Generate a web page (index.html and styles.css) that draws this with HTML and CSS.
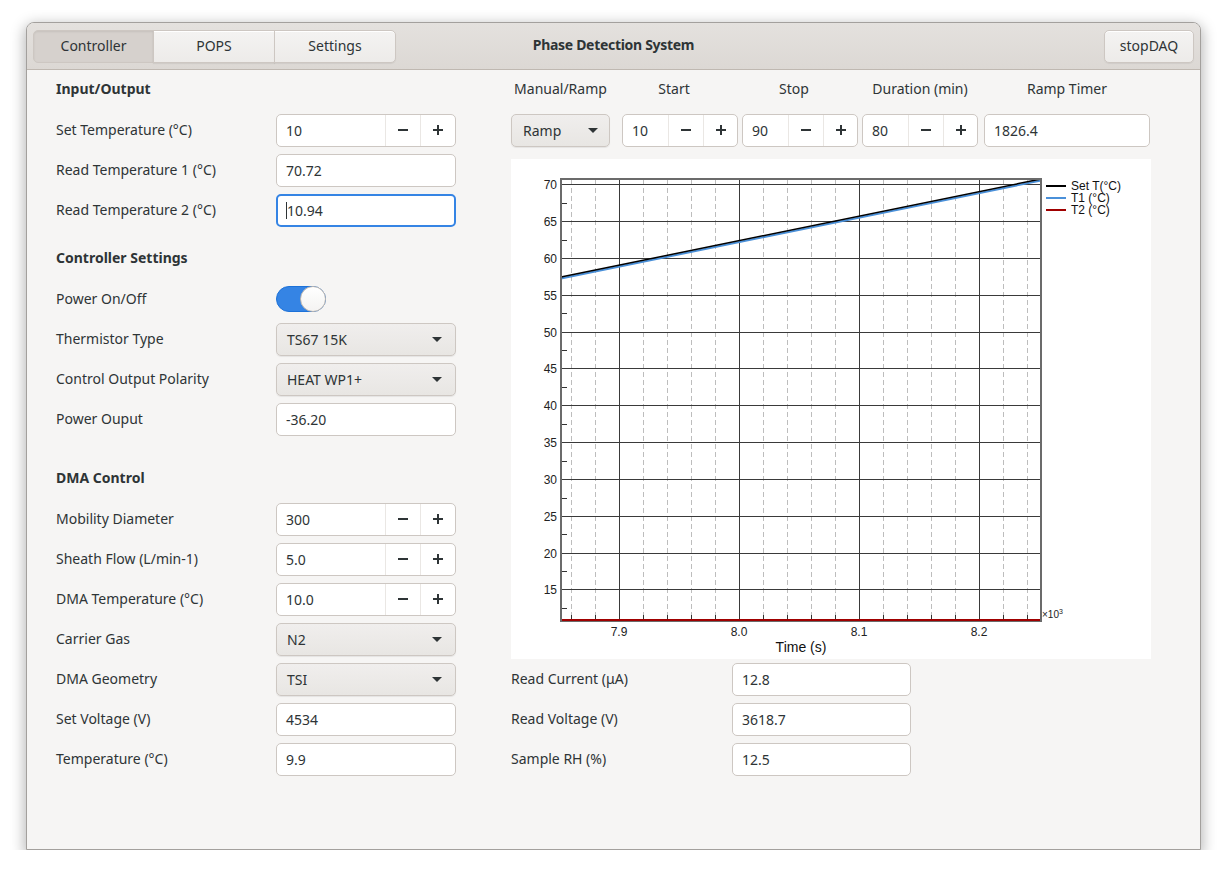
FILE: index.html
```html
<!DOCTYPE html>
<html>
<head>
<meta charset="utf-8">
<link rel="stylesheet" href="styles.css">
</head>
<body>
<div class="window">
  <header class="headerbar">
    <div class="tabs">
      <button class="tab active">Controller</button>
      <button class="tab">POPS</button>
      <button class="tab">Settings</button>
    </div>
    <div class="title">Phase Detection System</div>
    <div class="hb-end"><button class="btn stop">stopDAQ</button></div>
  </header>
  <main class="content">
    <section class="left">
      <div class="heading">Input/Output</div>
      <div class="row"><span class="label">Set Temperature (°C)</span>
        <div class="spin"><span class="val">10</span><span class="sb"><svg width="12" height="12" viewBox="0 0 12 12"><rect x="1" y="5" width="10" height="2" fill="#2e3436"/></svg></span><span class="sb"><svg width="12" height="12" viewBox="0 0 12 12"><rect x="1" y="5" width="10" height="2" fill="#2e3436"/><rect x="5" y="1" width="2" height="10" fill="#2e3436"/></svg></span></div></div>
      <div class="row"><span class="label">Read Temperature 1 (°C)</span><div class="entry">70.72</div></div>
      <div class="row"><span class="label">Read Temperature 2 (°C)</span><div class="entry focus"><span class="caret"></span>10.94</div></div>

      <div class="heading mt9">Controller Settings</div>
      <div class="row"><span class="label">Power On/Off</span><div class="switch"><span class="knob"></span></div></div>
      <div class="row"><span class="label">Thermistor Type</span><div class="combo"><span>TS67 15K</span><span class="arrow"></span></div></div>
      <div class="row"><span class="label">Control Output Polarity</span><div class="combo"><span>HEAT WP1+</span><span class="arrow"></span></div></div>
      <div class="row"><span class="label">Power Ouput</span><div class="entry">-36.20</div></div>

      <div class="heading mt20">DMA Control</div>
      <div class="row"><span class="label">Mobility Diameter</span>
        <div class="spin"><span class="val">300</span><span class="sb"><svg width="12" height="12" viewBox="0 0 12 12"><rect x="1" y="5" width="10" height="2" fill="#2e3436"/></svg></span><span class="sb"><svg width="12" height="12" viewBox="0 0 12 12"><rect x="1" y="5" width="10" height="2" fill="#2e3436"/><rect x="5" y="1" width="2" height="10" fill="#2e3436"/></svg></span></div></div>
      <div class="row"><span class="label">Sheath Flow (L/min-1)</span>
        <div class="spin"><span class="val">5.0</span><span class="sb"><svg width="12" height="12" viewBox="0 0 12 12"><rect x="1" y="5" width="10" height="2" fill="#2e3436"/></svg></span><span class="sb"><svg width="12" height="12" viewBox="0 0 12 12"><rect x="1" y="5" width="10" height="2" fill="#2e3436"/><rect x="5" y="1" width="2" height="10" fill="#2e3436"/></svg></span></div></div>
      <div class="row"><span class="label">DMA Temperature (°C)</span>
        <div class="spin"><span class="val">10.0</span><span class="sb"><svg width="12" height="12" viewBox="0 0 12 12"><rect x="1" y="5" width="10" height="2" fill="#2e3436"/></svg></span><span class="sb"><svg width="12" height="12" viewBox="0 0 12 12"><rect x="1" y="5" width="10" height="2" fill="#2e3436"/><rect x="5" y="1" width="2" height="10" fill="#2e3436"/></svg></span></div></div>
      <div class="row"><span class="label">Carrier Gas</span><div class="combo"><span>N2</span><span class="arrow"></span></div></div>
      <div class="row"><span class="label">DMA Geometry</span><div class="combo"><span>TSI</span><span class="arrow"></span></div></div>
      <div class="row"><span class="label">Set Voltage (V)</span><div class="entry">4534</div></div>
      <div class="row"><span class="label">Temperature (°C)</span><div class="entry">9.9</div></div>
    </section>

    <section class="right">
      <div class="ctrl-head">
        <span class="c-mode">Manual/Ramp</span>
        <span class="c-spin shift">Start</span>
        <span class="c-spin shift">Stop</span>
        <span class="c-spin">Duration (min)</span>
        <span class="c-timer">Ramp Timer</span>
      </div>
      <div class="ctrl-row">
        <div class="combo c-mode"><span>Ramp</span><span class="arrow"></span></div>
        <div class="spin small c-spin"><span class="val">10</span><span class="sb"><svg width="12" height="12" viewBox="0 0 12 12"><rect x="1" y="5" width="10" height="2" fill="#2e3436"/></svg></span><span class="sb"><svg width="12" height="12" viewBox="0 0 12 12"><rect x="1" y="5" width="10" height="2" fill="#2e3436"/><rect x="5" y="1" width="2" height="10" fill="#2e3436"/></svg></span></div>
        <div class="spin small c-spin"><span class="val">90</span><span class="sb"><svg width="12" height="12" viewBox="0 0 12 12"><rect x="1" y="5" width="10" height="2" fill="#2e3436"/></svg></span><span class="sb"><svg width="12" height="12" viewBox="0 0 12 12"><rect x="1" y="5" width="10" height="2" fill="#2e3436"/><rect x="5" y="1" width="2" height="10" fill="#2e3436"/></svg></span></div>
        <div class="spin small c-spin"><span class="val">80</span><span class="sb"><svg width="12" height="12" viewBox="0 0 12 12"><rect x="1" y="5" width="10" height="2" fill="#2e3436"/></svg></span><span class="sb"><svg width="12" height="12" viewBox="0 0 12 12"><rect x="1" y="5" width="10" height="2" fill="#2e3436"/><rect x="5" y="1" width="2" height="10" fill="#2e3436"/></svg></span></div>
        <div class="entry c-timer">1826.4</div>
      </div>

      <div class="chart">
        <svg width="640" height="500" viewBox="0 0 640 500" font-family="'Liberation Sans', Arial, sans-serif">
          <rect x="0" y="0" width="640" height="500" fill="#fff"/>
          <g stroke="#bdbdbd" stroke-width="1" stroke-dasharray="5,3">
            <line x1="60.5" y1="21" x2="60.5" y2="461"/>
            <line x1="84.5" y1="21" x2="84.5" y2="461"/>
            <line x1="132.5" y1="21" x2="132.5" y2="461"/>
            <line x1="156.5" y1="21" x2="156.5" y2="461"/>
            <line x1="180.5" y1="21" x2="180.5" y2="461"/>
            <line x1="204.5" y1="21" x2="204.5" y2="461"/>
            <line x1="252.5" y1="21" x2="252.5" y2="461"/>
            <line x1="276.5" y1="21" x2="276.5" y2="461"/>
            <line x1="300.5" y1="21" x2="300.5" y2="461"/>
            <line x1="324.5" y1="21" x2="324.5" y2="461"/>
            <line x1="372.5" y1="21" x2="372.5" y2="461"/>
            <line x1="396.5" y1="21" x2="396.5" y2="461"/>
            <line x1="420.5" y1="21" x2="420.5" y2="461"/>
            <line x1="444.5" y1="21" x2="444.5" y2="461"/>
            <line x1="492.5" y1="21" x2="492.5" y2="461"/>
            <line x1="516.5" y1="21" x2="516.5" y2="461"/>
          </g>
          <g stroke="#3a3a3a" stroke-width="1">
            <line x1="108.5" y1="21" x2="108.5" y2="461"/>
            <line x1="228.5" y1="21" x2="228.5" y2="461"/>
            <line x1="348.5" y1="21" x2="348.5" y2="461"/>
            <line x1="468.5" y1="21" x2="468.5" y2="461"/>
            <line x1="50" y1="25.5" x2="530" y2="25.5"/>
            <line x1="50" y1="62.5" x2="530" y2="62.5"/>
            <line x1="50" y1="99.5" x2="530" y2="99.5"/>
            <line x1="50" y1="136.5" x2="530" y2="136.5"/>
            <line x1="50" y1="173.5" x2="530" y2="173.5"/>
            <line x1="50" y1="209.5" x2="530" y2="209.5"/>
            <line x1="50" y1="246.5" x2="530" y2="246.5"/>
            <line x1="50" y1="283.5" x2="530" y2="283.5"/>
            <line x1="50" y1="320.5" x2="530" y2="320.5"/>
            <line x1="50" y1="357.5" x2="530" y2="357.5"/>
            <line x1="50" y1="394.5" x2="530" y2="394.5"/>
            <line x1="50" y1="430.5" x2="530" y2="430.5"/>
          </g>
          <g stroke="#333" stroke-width="1">
            <line x1="50" y1="44.5" x2="56" y2="44.5"/>
            <line x1="50" y1="81.5" x2="56" y2="81.5"/>
            <line x1="50" y1="118.5" x2="56" y2="118.5"/>
            <line x1="50" y1="154.5" x2="56" y2="154.5"/>
            <line x1="50" y1="191.5" x2="56" y2="191.5"/>
            <line x1="50" y1="228.5" x2="56" y2="228.5"/>
            <line x1="50" y1="265.5" x2="56" y2="265.5"/>
            <line x1="50" y1="302.5" x2="56" y2="302.5"/>
            <line x1="50" y1="339.5" x2="56" y2="339.5"/>
            <line x1="50" y1="375.5" x2="56" y2="375.5"/>
            <line x1="50" y1="412.5" x2="56" y2="412.5"/>
            <line x1="50" y1="449.5" x2="56" y2="449.5"/>
            <line x1="60.5" y1="456" x2="60.5" y2="462"/>
            <line x1="84.5" y1="456" x2="84.5" y2="462"/>
            <line x1="108.5" y1="454" x2="108.5" y2="462"/>
            <line x1="132.5" y1="456" x2="132.5" y2="462"/>
            <line x1="156.5" y1="456" x2="156.5" y2="462"/>
            <line x1="180.5" y1="456" x2="180.5" y2="462"/>
            <line x1="204.5" y1="456" x2="204.5" y2="462"/>
            <line x1="228.5" y1="454" x2="228.5" y2="462"/>
            <line x1="252.5" y1="456" x2="252.5" y2="462"/>
            <line x1="276.5" y1="456" x2="276.5" y2="462"/>
            <line x1="300.5" y1="456" x2="300.5" y2="462"/>
            <line x1="324.5" y1="456" x2="324.5" y2="462"/>
            <line x1="348.5" y1="454" x2="348.5" y2="462"/>
            <line x1="372.5" y1="456" x2="372.5" y2="462"/>
            <line x1="396.5" y1="456" x2="396.5" y2="462"/>
            <line x1="420.5" y1="456" x2="420.5" y2="462"/>
            <line x1="444.5" y1="456" x2="444.5" y2="462"/>
            <line x1="468.5" y1="454" x2="468.5" y2="462"/>
            <line x1="492.5" y1="456" x2="492.5" y2="462"/>
            <line x1="516.5" y1="456" x2="516.5" y2="462"/>
          </g>
          <line x1="50" y1="119.5" x2="530" y2="21.5" stroke="#4a90d9" stroke-width="2"/>
          <line x1="50" y1="118" x2="530" y2="20" stroke="#000" stroke-width="1.5"/>
          <rect x="50" y="20" width="480" height="442" fill="none" stroke="#6b6b6b" stroke-width="2"/>
          <line x1="51" y1="461" x2="529" y2="461" stroke="#a00000" stroke-width="2"/>
          <g font-size="12" fill="#222" text-anchor="end">
            <text x="46" y="30">70</text>
            <text x="46" y="67">65</text>
            <text x="46" y="104">60</text>
            <text x="46" y="141">55</text>
            <text x="46" y="178">50</text>
            <text x="46" y="214">45</text>
            <text x="46" y="251">40</text>
            <text x="46" y="288">35</text>
            <text x="46" y="325">30</text>
            <text x="46" y="362">25</text>
            <text x="46" y="399">20</text>
            <text x="46" y="435">15</text>
          </g>
          <g font-size="12" fill="#222" text-anchor="middle">
            <text x="108" y="477">7.9</text>
            <text x="228" y="477">8.0</text>
            <text x="348" y="477">8.1</text>
            <text x="468" y="477">8.2</text>
          </g>
          <text x="290" y="493" font-size="14" fill="#111" text-anchor="middle">Time (s)</text>
          <text x="531" y="459" font-size="10" fill="#222">×10<tspan font-size="7" dy="-4">3</tspan></text>
          <line x1="535" y1="27" x2="555" y2="27" stroke="#000" stroke-width="2"/>
          <line x1="535" y1="39" x2="555" y2="39" stroke="#4a90d9" stroke-width="2"/>
          <line x1="535" y1="51" x2="555" y2="51" stroke="#a00000" stroke-width="2"/>
          <g font-size="12" fill="#111">
            <text x="560" y="31">Set T(°C)</text>
            <text x="560" y="43">T1 (°C)</text>
            <text x="560" y="55">T2 (°C)</text>
          </g>
        </svg>
      </div>

      <div class="row r2"><span class="label">Read Current (μA)</span><div class="entry">12.8</div></div>
      <div class="row r2"><span class="label">Read Voltage (V)</span><div class="entry">3618.7</div></div>
      <div class="row r2"><span class="label">Sample RH (%)</span><div class="entry">12.5</div></div>
    </section>
  </main>
</div>
</body>
</html>
```

FILE: styles.css
```css
* { box-sizing: border-box; }
html, body { margin: 0; }
body {
  background: #ffffff;
  padding: 22px 26px 0 26px;
  font-family: "Noto Sans", "DejaVu Sans", sans-serif;
  font-size: 14px;
  color: #2e3436;
}
.window {
  width: 1175px;
  height: 828px;
  border: 1px solid #a3a09d;
  border-radius: 8px 8px 0 0;
  background: #f6f5f4;
  box-shadow: 0 4px 14px 2px rgba(0,0,0,0.28);
  overflow: hidden;
  display: flex;
  flex-direction: column;
}
.headerbar {
  height: 47px;
  flex: none;
  display: grid;
  grid-template-columns: 1fr auto 1fr;
  align-items: center;
  padding: 0 6px;
  background: linear-gradient(#e4e1de, #dcd8d4);
  border-bottom: 1px solid #bfb8b1;
}
.tabs { display: flex; }
.tab, .btn {
  font-family: inherit;
  font-size: 14px;
  color: #2e3436;
  height: 33px;
  border: 1px solid #cdc7c2;
  background: linear-gradient(#f4f3f2, #edebe9);
  box-shadow: inset 0 1px #fff, 0 1px 1px rgba(0,0,0,0.06);
  padding: 0 0 2px 0;
}
.tab { width: 122px; margin-left: -1px; border-radius: 0; }
.tab:first-child { margin-left: 0; border-radius: 5px 0 0 5px; width: 121px; }
.tab:last-child { border-radius: 0 5px 5px 0; }
.tab.active { background: #d6d1cd; box-shadow: inset 0 1px 2px rgba(0,0,0,0.08); border-color: #cdc7c2; }
.title { font-weight: bold; font-size: 14px; letter-spacing: -0.3px; padding-bottom: 3px; }
.hb-end { display: flex; justify-content: flex-end; }
.btn.stop { width: 90px; border-radius: 5px; }

.content {
  flex: 1;
  display: flex;
  padding-left: 29px;
}
.left { width: 400px; display: flex; flex-direction: column; }
.right { width: 640px; margin-left: 55px; display: flex; flex-direction: column; }

.heading { height: 40px; line-height: 38px; font-weight: bold; }
.mt9 { margin-top: 9px; }
.mt20 { margin-top: 20px; }
.row {
  height: 40px;
  display: grid;
  grid-template-columns: 220px 180px;
  align-items: center;
}
.row.r2 { grid-template-columns: 221px 179px; }
.label { white-space: nowrap; padding-bottom: 1px; }

.entry, .spin, .combo {
  height: 33px;
  border: 1px solid #cdc7c2;
  border-radius: 5px;
  display: flex;
  align-items: center;
}
.entry { background: #fff; padding-left: 9px; }
.entry.focus { border: 2px solid #3584e4; padding-left: 8px; }
.caret { display: inline-block; width: 1px; height: 17px; background: #2e3436; }
.spin { background: #fff; }
.spin .val { flex: 1; padding-left: 9px; }
.sb {
  width: 35px; height: 100%;
  display: flex; align-items: center; justify-content: center;
  border-left: 1px solid #eae7e4;
}
.spin.small .sb:last-child { width: 34px; }
.combo {
  background: linear-gradient(#f0eeed, #e8e6e3);
  box-shadow: 0 1px 1px rgba(0,0,0,0.07);
  justify-content: space-between;
  padding: 0 13px 0 10px;
}
.arrow {
  width: 0; height: 0;
  border-left: 5px solid transparent;
  border-right: 5px solid transparent;
  border-top: 5px solid #2e3436;
}
.switch {
  width: 50px; height: 26px;
  border-radius: 13px;
  background: #3584e4;
  border: 1px solid #1c71d8;
  display: flex; justify-content: flex-end; align-items: center;
}
.knob {
  width: 26px; height: 26px;
  border-radius: 50%;
  background: linear-gradient(#ffffff, #f4f3f2);
  border: 1px solid #bfb8b1;
  margin-right: -1px;
}

.ctrl-head, .ctrl-row { display: flex; height: 40px; align-items: center; }
.ctrl-head span { text-align: center; padding-bottom: 3px; }
.c-mode { width: 99px; margin-right: 12px; flex: none; }
.c-spin { width: 116px; margin-right: 4px; flex: none; }
.ctrl-head .c-spin:nth-child(4) { margin-right: 6px; }
.ctrl-row .c-spin:nth-child(4) { margin-right: 6px; }
.c-timer { width: 166px; flex: none; }
.ctrl-head .shift { padding-right: 12px; }
.ctrl-row .combo.c-mode { padding: 0 11px 0 11px; }
.chart { margin-top: 9px; height: 500px; }
.chart svg { display: block; }
```
